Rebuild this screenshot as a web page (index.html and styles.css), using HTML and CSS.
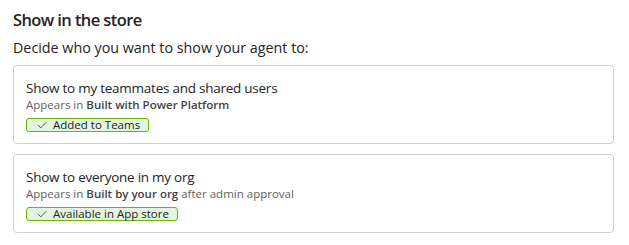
FILE: index.html
```html
<!DOCTYPE html>
<html>
<head>
<meta charset="utf-8">
<link rel="stylesheet" href="styles.css">
</head>
<body>
<section class="panel">
  <h2 class="heading">Show in the store</h2>
  <p class="intro">Decide who you want to show your agent to:</p>
  <div class="cards">
    <div class="card">
      <div class="card-title">Show to my teammates and shared users</div>
      <div class="card-sub">Appears in <b>Built with Power Platform</b></div>
      <span class="badge"><svg class="check" viewBox="0 0 10 8" width="10" height="8"><path d="M1 4.2 L3.8 6.8 L9.2 1.2" fill="none" stroke="#424242" stroke-width="0.9"/></svg>Added to Teams</span>
    </div>
    <div class="card">
      <div class="card-title">Show to everyone in my org</div>
      <div class="card-sub">Appears in <b>Built by your org</b> after admin approval</div>
      <span class="badge"><svg class="check" viewBox="0 0 10 8" width="10" height="8"><path d="M1 4.2 L3.8 6.8 L9.2 1.2" fill="none" stroke="#424242" stroke-width="0.9"/></svg>Available in App store</span>
    </div>
  </div>
</section>
</body>
</html>
```
FILE: styles.css
```css
* { box-sizing: border-box; }
html, body { margin: 0; padding: 0; background: #fff; }
body {
  font-family: "Open Sans", "Noto Sans", sans-serif;
  color: #242424;
}
.panel { padding: 7px 15px 0 13px; }
.heading {
  margin: 0;
  font-size: 16.5px;
  font-weight: 600;
  letter-spacing: -0.6px;
  line-height: 25px;
}
.intro {
  margin: 6px 0 0;
  font-size: 14.3px;
  line-height: 20px;
}
.cards {
  margin-top: 7px;
  display: flex;
  flex-direction: column;
  gap: 10px;
}
.card {
  border: 1px solid #d1d1d1;
  border-radius: 4px;
  padding: 13px 12px 11px;
}
.card-title {
  font-size: 13.5px;
  letter-spacing: -0.25px;
  line-height: 18px;
}
.card-sub {
  font-size: 11.5px;
  line-height: 16px;
  color: #616161;
}
.card-sub b { font-weight: 600; color: #424242; }
.badge {
  display: flex;
  width: fit-content;
  align-items: center;
  gap: 6px;
  height: 14px;
  margin-top: 5px;
  padding: 0 8px 0 10px;
  border: 1px solid #6bb700;
  border-radius: 3px;
  background: #e3f5df;
  font-size: 11.5px;
  line-height: 12px;
  color: #242424;
}
.check { display: block; }
```
